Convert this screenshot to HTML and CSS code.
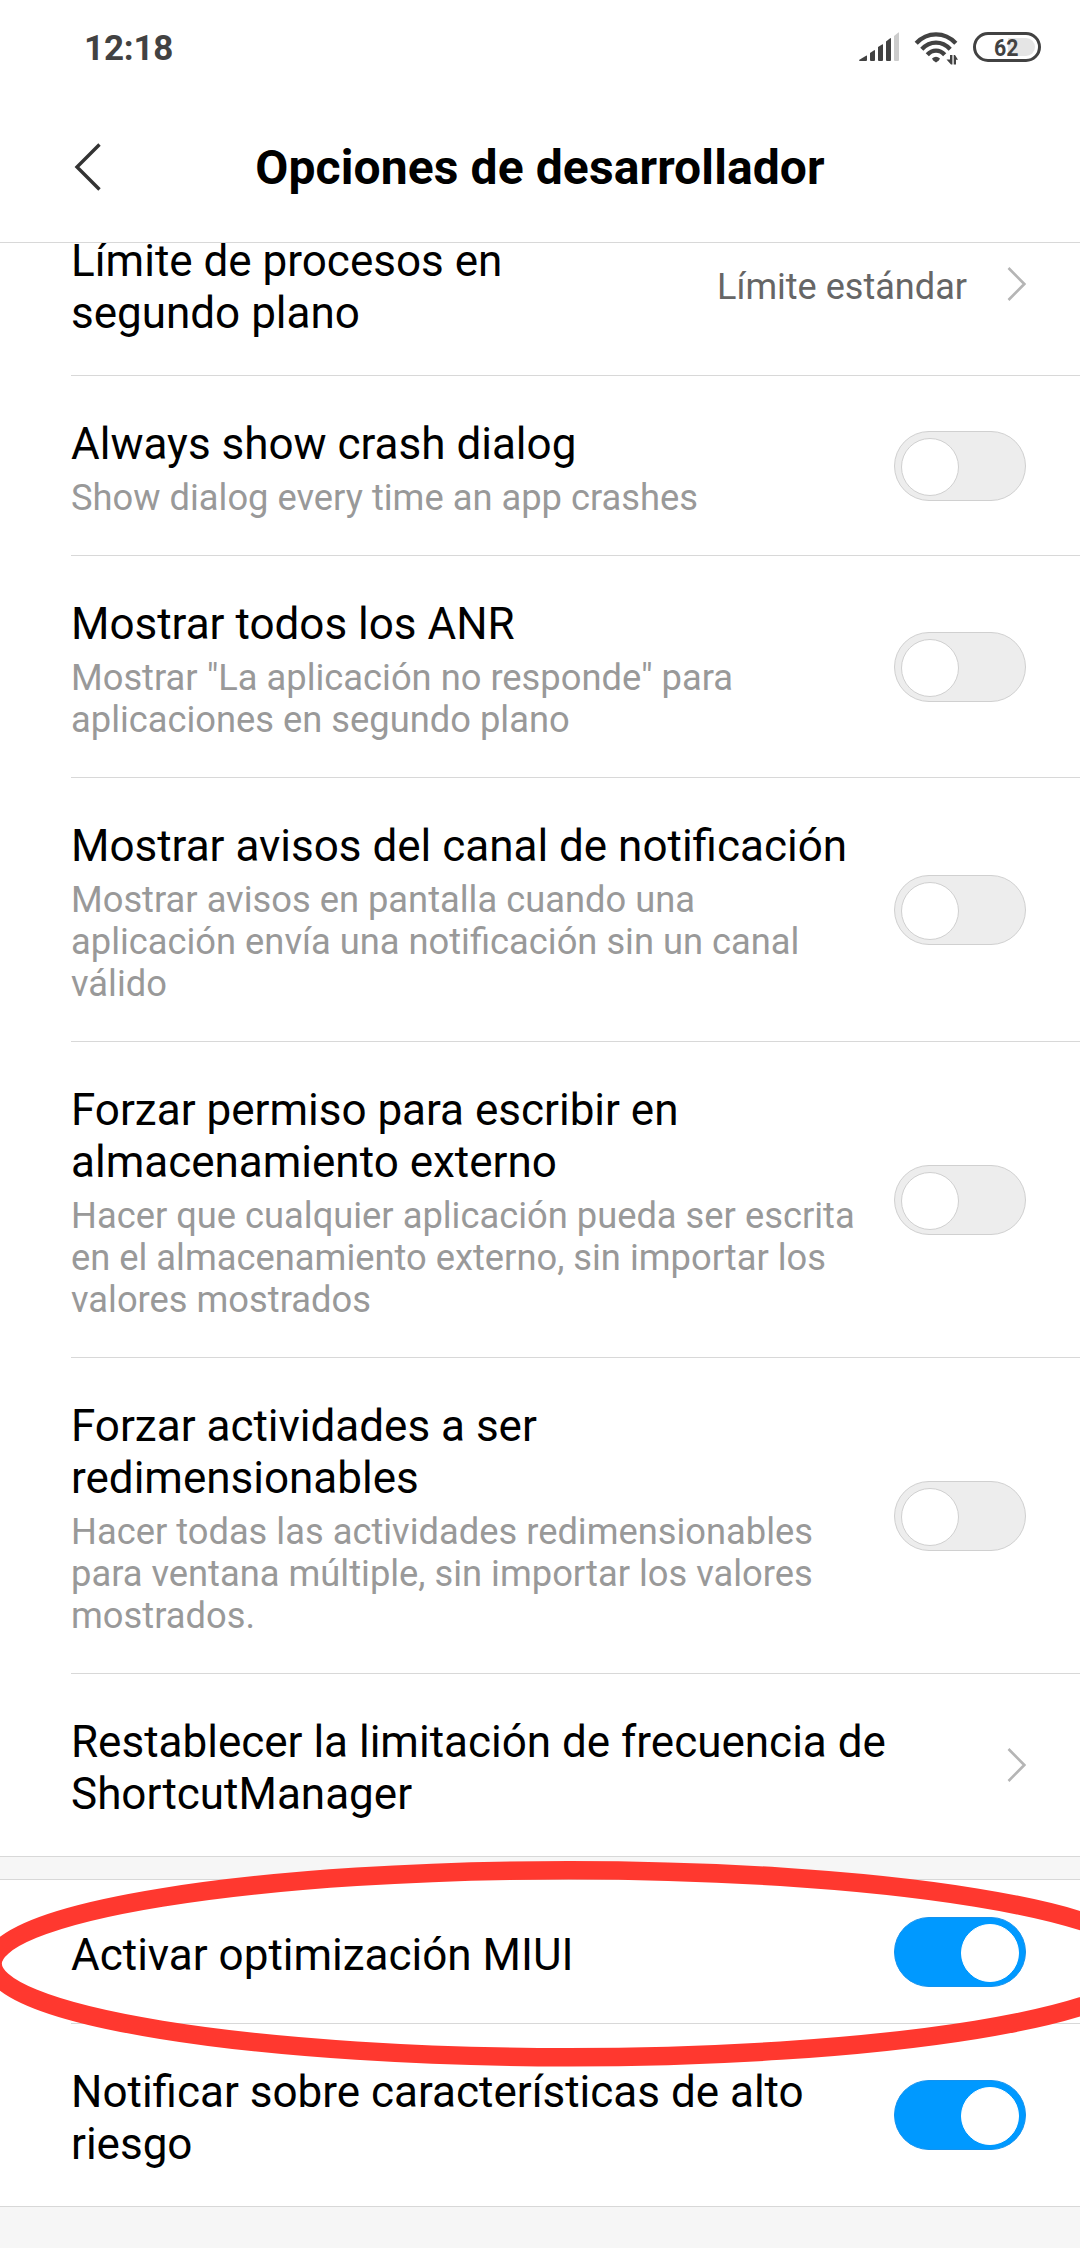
FILE: index.html
```html
<!DOCTYPE html>
<html lang="es">
<head>
<meta charset="utf-8">
<title>Opciones de desarrollador</title>
<link rel="stylesheet" href="styles.css">
</head>
<body>
<div class="status-bar">
  <span class="clock">12:18</span>
  <svg class="status-icons" width="184" height="36" viewBox="858 30 184 36">
    <g fill="#424242">
      <path d="M859 60 L866.5 55.5 Q867 55.4 867 56 V60 Q867 61 866 61 H860 Q859 61 859 60Z"/>
      <path d="M870 53 L874.5 50 Q875 50 875 50.6 V60 Q875 61 874 61 H871 Q870 61 870 60Z"/>
      <path d="M878 47 L882.5 44.2 Q883 44 883 44.8 V60 Q883 61 882 61 H879 Q878 61 878 60Z"/>
      <path d="M886 41.5 L890.5 38 Q891 38 891 38.6 V60 Q891 61 890 61 H887 Q886 61 886 60Z"/>
    </g>
    <path fill="#cccccc" d="M894 36 L898.4 32.4 Q899 32.2 899 33 V60 Q899 61 898 61 H895 Q894 61 894 60Z"/>
    <g fill="none" stroke="#424242" stroke-width="4.3">
      <path d="M916.2 43.3 Q924.5 34.4 936 34.4 Q947.5 34.4 955.8 43.3"/>
      <path d="M921.8 49.2 Q928 42.6 936 42.6 Q944 42.6 950.2 49.2"/>
      <path d="M927.3 54.8 Q931 50.7 936 50.7 Q941 50.7 944.7 54.8"/>
    </g>
    <path fill="#424242" d="M932 58.6 Q936 54.8 940 58.6 Q939.6 60.6 936 62.4 Q932.4 60.6 932 58.6Z"/>
    <path fill="#424242" d="M950 55 H952.4 V64.5 H951 L946.5 59.5 H950Z M953.7 55 H955 L958 59.8 H956 V64.5 H953.7Z"/>
    <rect x="983" y="38" width="52" height="18" rx="9" fill="#e5e5e5"/>
    <rect x="980" y="37" width="28" height="20" fill="#fff"/>
    <rect x="974.5" y="33.5" width="65" height="27" rx="13.5" fill="none" stroke="#424242" stroke-width="3"/>
    <text class="battery-level" x="994" y="56" textLength="24.5" lengthAdjust="spacingAndGlyphs">62</text>
  </svg>
</div>
<header class="app-bar">
  <svg class="back" width="28" height="50" viewBox="0 0 28 50"><path d="M25.5 2.5 L3 25 L25.5 47.5"/></svg>
  <h1>Opciones de desarrollador</h1>
</header>
<main class="list">
  <div class="row row-partial">
    <div class="text"><div class="title">Límite de procesos en<br>segundo plano</div></div>
    <span class="value">Límite estándar</span>
    <svg class="chevron" width="19" height="34" viewBox="0 0 19 34"><path d="M1.5 1 L17.3 17 L1.5 33"/></svg>
  </div>
  <div class="row">
    <div class="text"><div class="title">Always show crash dialog</div><div class="sub">Show dialog every time an app crashes</div></div>
    <span class="toggle"></span>
  </div>
  <div class="row">
    <div class="text"><div class="title">Mostrar todos los ANR</div><div class="sub">Mostrar "La aplicación no responde" para<br>aplicaciones en segundo plano</div></div>
    <span class="toggle"></span>
  </div>
  <div class="row">
    <div class="text"><div class="title">Mostrar avisos del canal de notificación</div><div class="sub">Mostrar avisos en pantalla cuando una<br>aplicación envía una notificación sin un canal<br>válido</div></div>
    <span class="toggle"></span>
  </div>
  <div class="row">
    <div class="text"><div class="title">Forzar permiso para escribir en<br>almacenamiento externo</div><div class="sub">Hacer que cualquier aplicación pueda ser escrita<br>en el almacenamiento externo, sin importar los<br>valores mostrados</div></div>
    <span class="toggle"></span>
  </div>
  <div class="row">
    <div class="text"><div class="title">Forzar actividades a ser<br>redimensionables</div><div class="sub">Hacer todas las actividades redimensionables<br>para ventana múltiple, sin importar los valores<br>mostrados.</div></div>
    <span class="toggle"></span>
  </div>
  <div class="row row-last">
    <div class="text"><div class="title">Restablecer la limitación de frecuencia de<br>ShortcutManager</div></div>
    <svg class="chevron" width="19" height="34" viewBox="0 0 19 34"><path d="M1.5 1 L17.3 17 L1.5 33"/></svg>
  </div>
  <div class="section-gap"></div>
  <div class="row">
    <div class="text"><div class="title">Activar optimización MIUI</div></div>
    <span class="toggle on"></span>
  </div>
  <div class="row row-last">
    <div class="text"><div class="title">Notificar sobre características de alto<br>riesgo</div></div>
    <span class="toggle on"></span>
  </div>
</main>
<svg class="highlight" width="1080" height="230" viewBox="0 1850 1080 230"><ellipse cx="568.6" cy="1963.7" rx="576" ry="93.5"/></svg>
</body>
</html>
```
FILE: styles.css
```css
* { box-sizing: border-box; }

body {
  position: relative;
  display: flex;
  flex-direction: column;
  width: 1080px;
  height: 2248px;
  margin: 0;
  overflow: hidden;
  background: #f6f6f6;
  color: #000;
  font-family: Roboto, "Liberation Sans", sans-serif;
}

.status-bar {
  display: flex;
  justify-content: space-between;
  height: 92px;
  padding: 30px 38px 0 84px;
  background: #fff;
}

.clock {
  padding-top: 1px;
  font-size: 35px;
  font-weight: 700;
  line-height: 36px;
  letter-spacing: -0.2px;
  color: #424242;
}

.battery-level { font-size: 24.5px; font-weight: 700; fill: #424242; }

.app-bar {
  display: grid;
  grid-template-columns: 28px 1fr 28px;
  align-items: center;
  height: 151px;
  padding: 0 74px;
  border-bottom: 1px solid #d8d8d8;
  background: #fff;
}

.back path { fill: none; stroke: #333; stroke-width: 3.4; }

h1 {
  margin: 0;
  padding-top: 2px;
  font-size: 48px;
  font-weight: 700;
  line-height: 56px;
  letter-spacing: 0.11px;
  text-align: center;
}

.list { flex: 1; overflow: hidden; }

.row {
  position: relative;
  display: flex;
  align-items: center;
  min-height: 144px;
  padding: 0 54px 1px 71px;
  background: linear-gradient(#d8d8d8, #d8d8d8) 71px 100% / 100% 1px no-repeat #fff;
}

.row-partial { margin-top: -50px; }
.row-last { background-position: 0 100%; }

.text {
  flex: 1;
  padding: 42px 0 36px;
  white-space: nowrap;
}

.title { font-size: 44px; line-height: 52px; }
.sub { margin-top: 7px; font-size: 36.3px; line-height: 42px; color: #999; }
.value { padding: 6px 40px 0 0; font-size: 36.1px; line-height: 42px; color: #666; }

.chevron path { fill: none; stroke: #b5b5b5; stroke-width: 2.6; }

.toggle {
  display: flex;
  flex: none;
  width: 132px;
  height: 70px;
  padding: 6px;
  border: 1px solid #d0d0d0;
  border-radius: 35px;
  background: #ededed;
}

.toggle::after {
  content: "";
  width: 56px;
  height: 56px;
  border: 1px solid #d0d0d0;
  border-radius: 50%;
  background: #fff;
}

.toggle.on {
  justify-content: flex-end;
  border-color: #1492ee;
  background: #0099ff;
}

.toggle.on::after { border-color: #fff; }

.section-gap {
  height: 23px;
  border-bottom: 1px solid #d8d8d8;
  background: #f6f6f6;
}

.highlight { position: absolute; left: 0; top: 1850px; }
.highlight ellipse { fill: none; stroke: #ff382f; stroke-width: 18.5; }
```
